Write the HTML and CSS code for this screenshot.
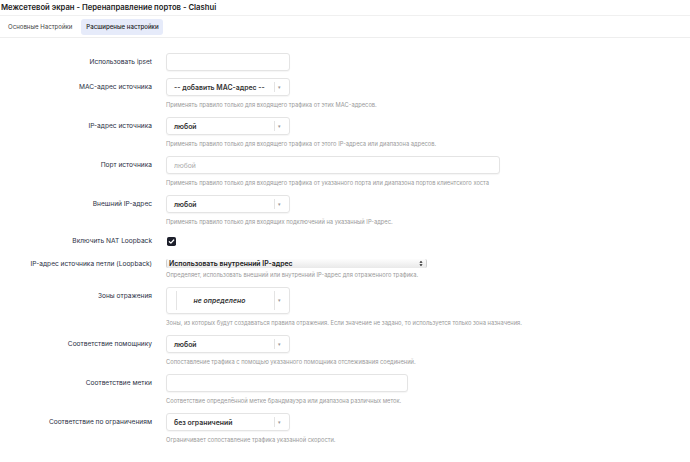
FILE: index.html
```html
<!DOCTYPE html>
<html lang="ru">
<head>
    <meta charset="UTF-8">
    <meta name="viewport" content="width=device-width, initial-scale=1.0">
    <title>Межсетевой экран - Перенаправление портов - Clashui</title>
    <link rel="stylesheet" href="styles.css">
</head>
<body>
    <h1 class="page-title">Межсетевой экран - Перенаправление портов - Clashui</h1>

    <nav class="tabs">
        <a class="tab" href="#">Основные Настройки</a>
        <a class="tab active" href="#">Расширеные настройки</a>
    </nav>

    <form class="settings">
        <div class="row">
            <label class="row-label">Использовать ipset</label>
            <div class="row-field">
                <input type="text" class="text-input short">
            </div>
        </div>

        <div class="row">
            <label class="row-label">MAC-адрес источника</label>
            <div class="row-field">
                <div class="select">
                    <span class="select-value">-- добавить MAC-адрес --</span>
                    <span class="select-arrow">▾</span>
                </div>
                <div class="help">Применять правило только для входящего трафика от этих MAC-адресов.</div>
            </div>
        </div>

        <div class="row">
            <label class="row-label">IP-адрес источника</label>
            <div class="row-field">
                <div class="select">
                    <span class="select-value">любой</span>
                    <span class="select-arrow">▾</span>
                </div>
                <div class="help">Применять правило только для входящего трафика от этого IP-адреса или диапазона адресов.</div>
            </div>
        </div>

        <div class="row">
            <label class="row-label">Порт источника</label>
            <div class="row-field">
                <input type="text" class="text-input wide" placeholder="любой">
                <div class="help">Применять правило только для входящего трафика от указанного порта или диапазона портов клиентского хоста</div>
            </div>
        </div>

        <div class="row">
            <label class="row-label">Внешний IP-адрес</label>
            <div class="row-field">
                <div class="select">
                    <span class="select-value">любой</span>
                    <span class="select-arrow">▾</span>
                </div>
                <div class="help">Применять правило только для входящих подключений на указанный IP-адрес.</div>
            </div>
        </div>

        <div class="row row-check">
            <label class="row-label">Включить NAT Loopback</label>
            <div class="row-field">
                <span class="checkbox">
                    <svg viewBox="0 0 10 10" width="9" height="9">
                        <rect x="0" y="0" width="10" height="10" rx="2" fill="#1d1f2b"/>
                        <path d="M2.6 5.2 L4.3 6.8 L7.5 3.3" fill="none" stroke="#fff" stroke-width="1.4" stroke-linecap="round" stroke-linejoin="round"/>
                    </svg>
                </span>
            </div>
        </div>

        <div class="row row-native">
            <label class="row-label">IP-адрес источника петли (Loopback)</label>
            <div class="row-field">
                <div class="native-select">
                    <span>Использовать внутренний IP-адрес</span>
                    <span class="native-arrows">
                        <svg viewBox="0 0 5 8" width="4" height="7">
                            <path d="M0.5 3 L2.5 0.6 L4.5 3 Z M0.5 5 L2.5 7.4 L4.5 5 Z" fill="#222"/>
                        </svg>
                    </span>
                </div>
                <div class="help">Определяет, использовать внешний или внутренний IP-адрес для отраженного трафика.</div>
            </div>
        </div>

        <div class="row">
            <label class="row-label">Зоны отражения</label>
            <div class="row-field">
                <div class="zone-select">
                    <span class="zone-value">не определено</span>
                    <span class="select-arrow">▾</span>
                </div>
                <div class="help">Зоны, из которых будут создаваться правила отражения. Если значение не задано, то используется только зона назначения.</div>
            </div>
        </div>

        <div class="row">
            <label class="row-label">Соответствие помощнику</label>
            <div class="row-field">
                <div class="select">
                    <span class="select-value">любой</span>
                    <span class="select-arrow">▾</span>
                </div>
                <div class="help">Сопоставление трафика с помощью указанного помощника отслеживания соединений.</div>
            </div>
        </div>

        <div class="row">
            <label class="row-label">Соответствие метки</label>
            <div class="row-field">
                <input type="text" class="text-input medium">
                <div class="help">Соответствие определённой метке брандмауэра или диапазона различных меток.</div>
            </div>
        </div>

        <div class="row">
            <label class="row-label">Соответствие по ограничениям</label>
            <div class="row-field">
                <div class="select">
                    <span class="select-value">без ограничений</span>
                    <span class="select-arrow">▾</span>
                </div>
                <div class="help">Ограничивает сопоставление трафика указанной скорости.</div>
            </div>
        </div>
    </form>
</body>
</html>
```

FILE: styles.css
```css
/* Basic reset */
* {
    margin: 0;
    padding: 0;
    box-sizing: border-box;
}

body {
    font-family: Inter, "Noto Sans", sans-serif;
    background-color: #fff;
    color: #2b2f45;
    width: 690px;
    height: 462px;
    overflow: hidden;
}

/* Page header */
.page-title {
    font-size: 7.7px;
    font-weight: 600;
    color: #222;
    line-height: 15px;
    padding-left: 1px;
    border-bottom: 1px solid #f0f0f0;
    height: 16px;
}

/* Tabs */
.tabs {
    display: flex;
    align-items: center;
    gap: 9px;
    height: 22px;
    padding-left: 8px;
    border-bottom: 1px solid #eee;
}

.tab {
    font-size: 6.1px;
    color: #444;
    text-decoration: none;
    line-height: 16px;
    border-radius: 3px;
}

.tab.active {
    background-color: #e6ebfa;
    color: #222;
    font-weight: 500;
    width: 82px;
    text-align: center;
}

/* Form */
.settings {
    padding-top: 15px;
}

.row {
    display: flex;
    align-items: flex-start;
    margin-bottom: 7px;
}

.row-label {
    width: 152px;
    flex-shrink: 0;
    text-align: right;
    font-size: 6.6px;
    line-height: 18px;
    color: #2b2f45;
    margin-right: 14px;
    white-space: nowrap;
}

.row-field {
    display: flex;
    flex-direction: column;
}

.help {
    margin-top: 4px;
    font-size: 5.75px;
    line-height: 10px;
    color: #9a9a9a;
    white-space: nowrap;
}

/* Inputs */
.text-input {
    height: 18px;
    border: 1px solid #e4e4e4;
    border-radius: 3px;
    box-shadow: 0 1px 1px rgba(0, 0, 0, 0.04);
    font-family: inherit;
    font-size: 6.8px;
    padding: 0 7px;
    background-color: #fff;
}

.text-input::placeholder {
    color: #aaa;
}

.text-input.short {
    width: 124px;
}

.text-input.wide {
    width: 334px;
}

.text-input.medium {
    width: 242px;
}

/* Select2-like dropdowns */
.select {
    display: flex;
    align-items: center;
    width: 124px;
    height: 18px;
    border: 1px solid #e4e4e4;
    border-radius: 3px;
    box-shadow: 0 1px 1px rgba(0, 0, 0, 0.04);
}

.select-value {
    flex: 1;
    padding-left: 7px;
    font-size: 6.9px;
    font-weight: 600;
    color: #333;
    white-space: nowrap;
}

.select-arrow {
    width: 9px;
    height: 10px;
    margin-right: 6px;
    border-left: 1px solid #e4e4e4;
    font-size: 5px;
    line-height: 10px;
    color: #999;
    text-align: center;
}

/* Checkbox */
.row-check .row-label {
    line-height: 14px;
}

.checkbox {
    display: block;
    margin-top: 3px;
    margin-left: 1px;
    height: 9px;
}

.checkbox svg {
    display: block;
}

/* Native select */
.row-native .native-select {
    margin-top: 4px;
}

.native-select {
    display: flex;
    align-items: center;
    justify-content: space-between;
    width: 261px;
    height: 9px;
    border-left: 1px solid #cfcfcf;
    border-right: 1px solid #cfcfcf;
    border-radius: 2px;
    background: linear-gradient(#fdfdfd, #e9e9e9);
    padding: 0 3px 0 2px;
    font-size: 6.9px;
    font-weight: 600;
    color: #1a1a1a;
}

.native-arrows svg {
    display: block;
}

.row-native .help {
    margin-top: 2px;
}

/* Zones dropdown */
.zone-select {
    display: flex;
    align-items: center;
    width: 124px;
    height: 27px;
    border: 1px solid #e4e4e4;
    border-radius: 3px;
    box-shadow: 0 1px 1px rgba(0, 0, 0, 0.04);
    padding-left: 9px;
}

.zone-value {
    flex: 1;
    height: 19px;
    border-left: 1px solid #e4e4e4;
    font-size: 6.9px;
    font-weight: 600;
    font-style: italic;
    color: #333;
    line-height: 19px;
    text-align: center;
    padding-right: 12px;
}

.zone-select .select-arrow {
    height: 19px;
    line-height: 19px;
}
```
